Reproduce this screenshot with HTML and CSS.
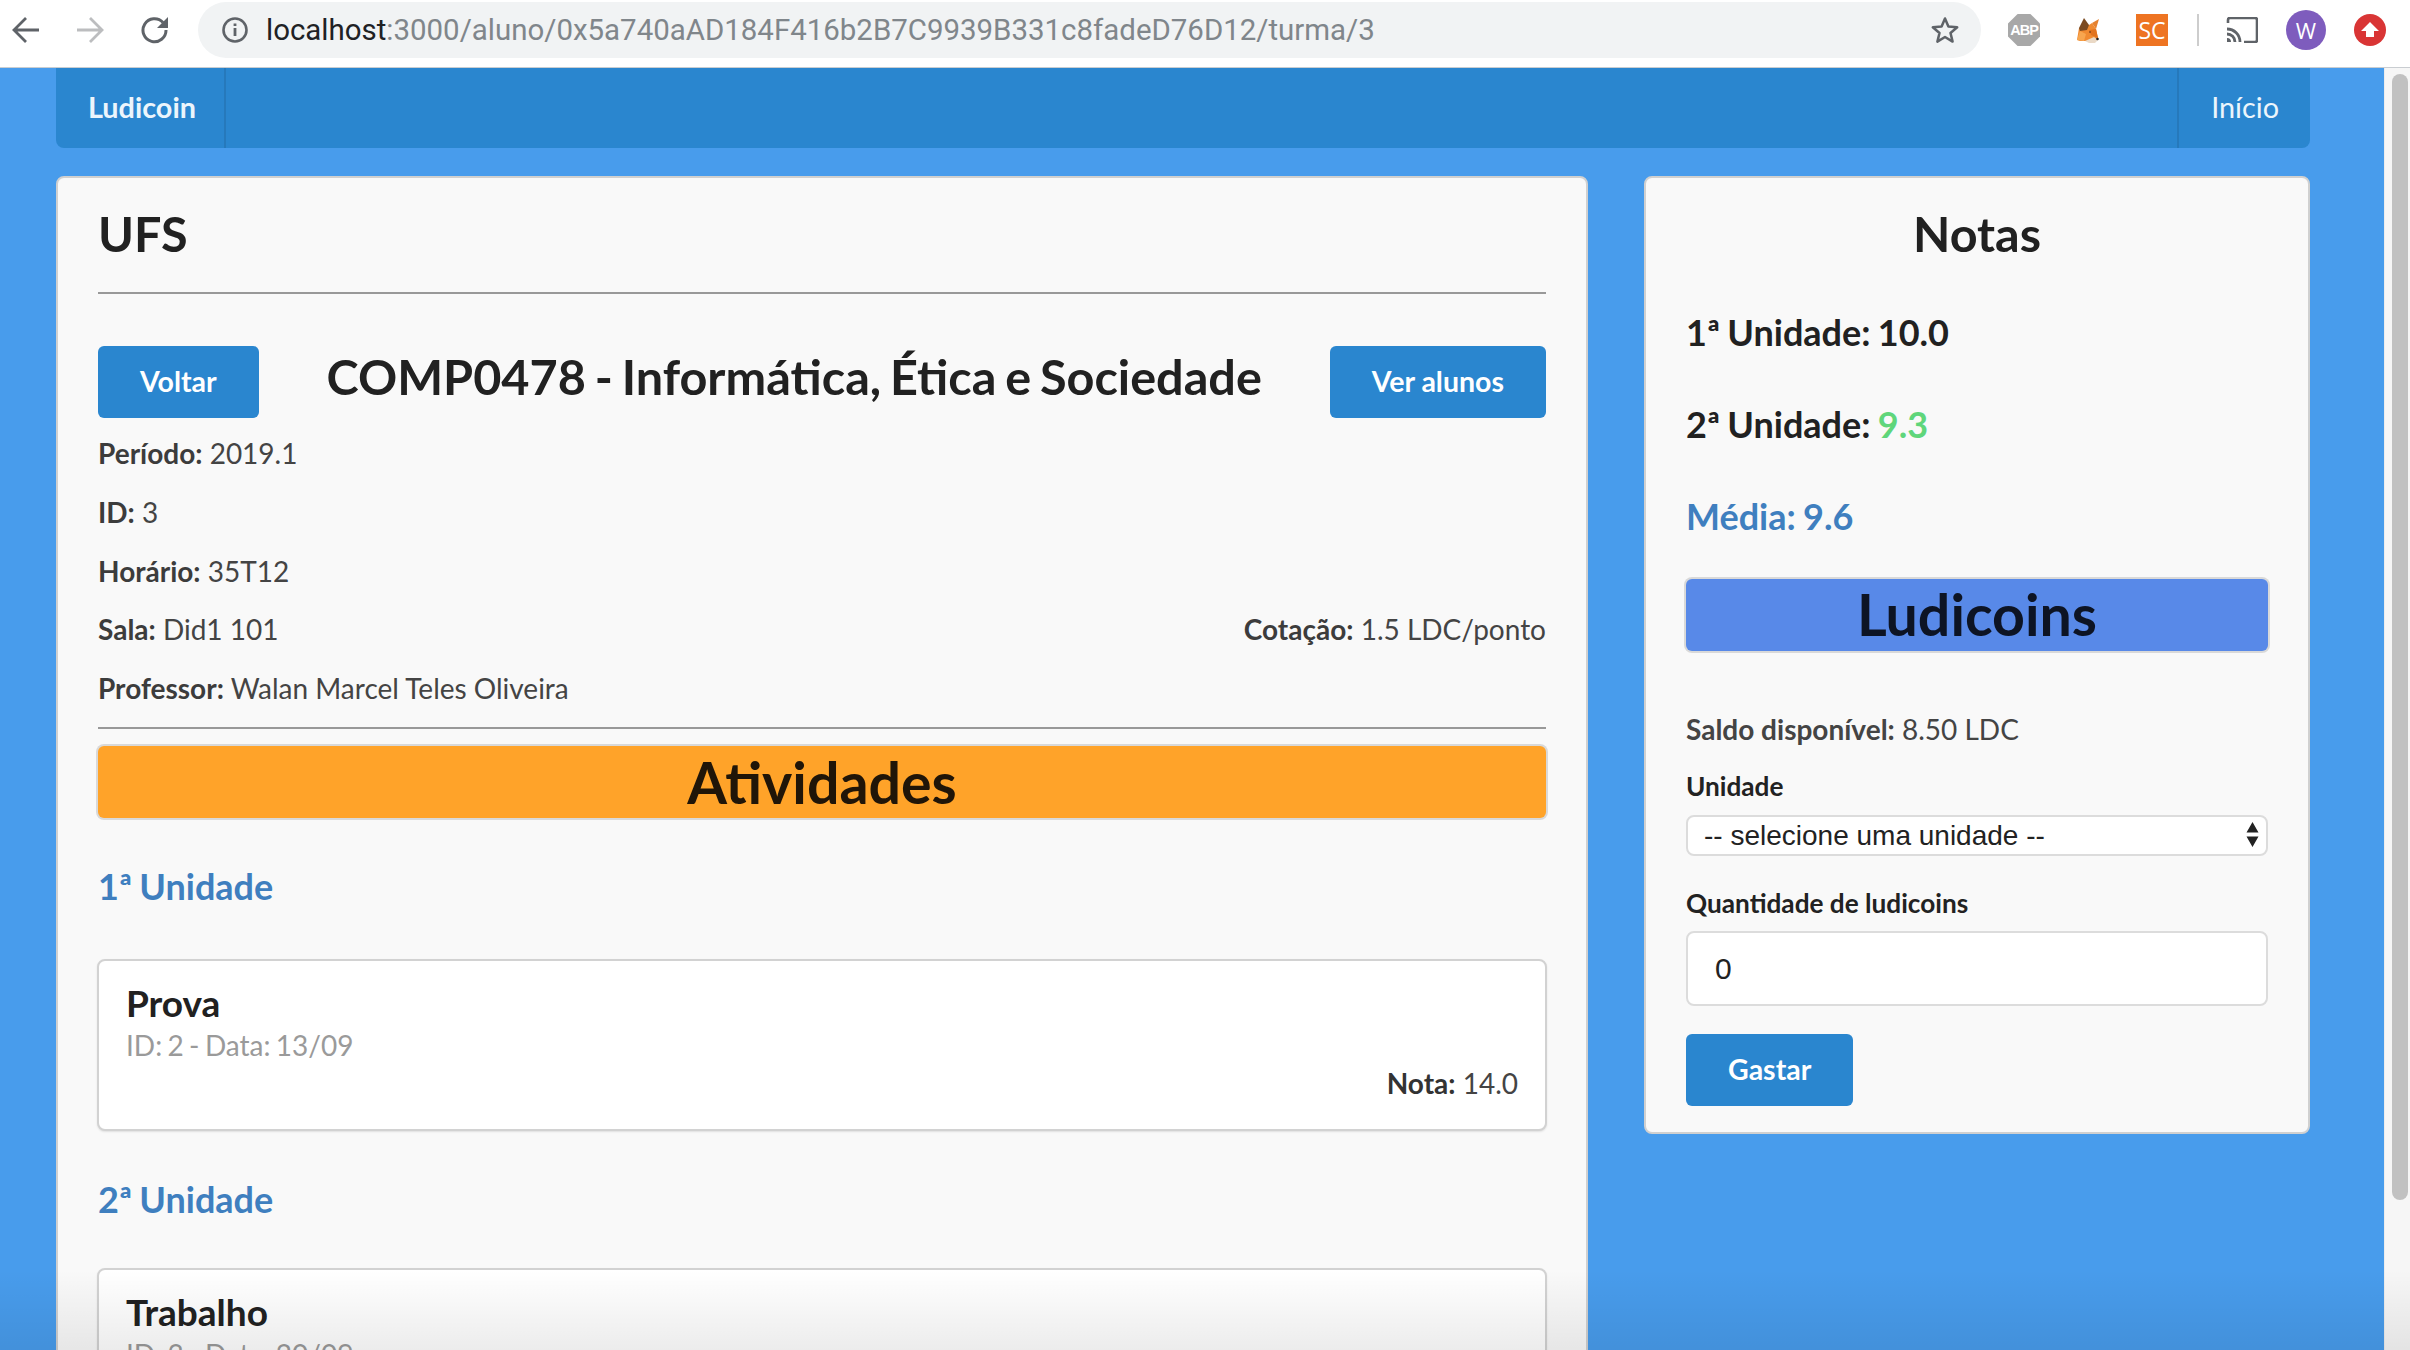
FILE: index.html
```html
<!DOCTYPE html>
<html lang="pt-BR">
<head>
<meta charset="utf-8">
<title>Ludicoin</title>
<link rel="stylesheet" href="styles.css">
</head>
<body>
<div class="window">
  <header class="chrome">
    <svg class="nav-icon" viewBox="0 0 28 28"><path d="M28 14H4M15 2 3 14l12 12" fill="none" stroke="#5f6368" stroke-width="2.8"/></svg>
    <svg class="nav-icon nav-forward" viewBox="0 0 28 28"><path d="M1 14h24M14 2l12 12-12 12" fill="none" stroke="#bcbdbf" stroke-width="2.8"/></svg>
    <svg class="nav-icon nav-reload" viewBox="0 0 28 28"><path d="M22 6.500A11.500 11.500 0 1 0 25 14" fill="none" stroke="#5f6368" stroke-width="3"/><path d="M27 1v11H16z" fill="#5f6368"/></svg>
    <div class="omnibox">
      <svg class="info-icon" viewBox="0 0 26 26"><circle cx="13" cy="13" r="11.500" fill="none" stroke="#5f6368" stroke-width="2.600"/><path d="M13 11v8M13 6.500v2.600" stroke="#5f6368" stroke-width="2.800"/></svg>
      <span class="url"><span class="url-host">localhost</span>:3000/aluno/0x5a740aAD184F416b2B7C9939B331c8fadeD76D12/turma/3</span>
      <svg class="star-icon" viewBox="0 0 30 30"><path d="M15 3.500l3.400 8.100 8.800.7-6.700 5.700 2.100 8.600L15 22l-7.600 4.600 2.100-8.600-6.700-5.700 8.800-.7z" fill="none" stroke="#5f6368" stroke-width="2.500" stroke-linejoin="round"/></svg>
    </div>
    <div class="extensions">
      <span class="ext-abp">ABP</span>
      <svg class="ext-fox" viewBox="0 0 22 25">
        <path d="M12 7l3-2 4 6 2 9-4 3H3l-3-1 2-12z" fill="#f08a30"/>
        <path d="M2 10 7 0l5 7-2 5-7 1z" fill="#7b4a20"/>
        <path d="M15 5l7-4-3 10z" fill="#e5812f"/>
        <path d="M0 22l3-9 6 3-2 7z" fill="#f7a64f"/>
        <path d="M12 12l7-1 2 9-7-3z" fill="#e2741f"/>
        <path d="M8 23l9-4 4 3-3 3h-6z" fill="#ead9c6"/>
        <circle cx="13" cy="14" r="1" fill="#8a4a1c"/>
        <circle cx="20.500" cy="21" r="1.300" fill="#222"/>
      </svg>
      <span class="ext-sc">SC</span>
      <span class="ext-sep"></span>
      <svg class="ext-cast" viewBox="0 0 32 26"><path d="M2 6V3a2 2 0 0 1 2-2h25a2 2 0 0 1 2 2v20a2 2 0 0 1-2 2H18" fill="none" stroke="#5f6368" stroke-width="2.600"/><path d="M1 12a13 13 0 0 1 13 13M1 17a8 8 0 0 1 8 8" fill="none" stroke="#5f6368" stroke-width="2.800"/><path d="M1 21a4 4 0 0 1 4 4H1z" fill="#5f6368"/></svg>
      <span class="ext-avatar">W</span>
      <svg class="ext-up" viewBox="0 0 32 32"><circle cx="16" cy="16" r="16" fill="#d93535"/><path d="M16 8l9 9h-5v6h-8v-6H7z" fill="#fff"/></svg>
    </div>
  </header>

  <div class="viewport">
    <div class="page">
      <nav class="navbar">
        <a class="brand">Ludicoin</a>
        <a class="nav-link">Início</a>
      </nav>
      <main class="columns">
        <section class="card">
          <h1 class="card-title">UFS</h1>
          <hr class="rule">
          <div class="course">
            <button class="btn">Voltar</button>
            <h2 class="course-name">COMP0478 - Informática, Ética e Sociedade</h2>
            <button class="btn">Ver alunos</button>
          </div>
          <p class="info"><b>Período:</b> 2019.1</p>
          <p class="info"><b>ID:</b> 3</p>
          <p class="info"><b>Horário:</b> 35T12</p>
          <p class="info info-split"><span><b>Sala:</b> Did1 101</span><span><b>Cotação:</b> 1.5 LDC/ponto</span></p>
          <p class="info info-last"><b>Professor:</b> Walan Marcel Teles Oliveira</p>
          <hr class="rule rule-tight">
          <div class="banner banner-orange">Atividades</div>
          <h3 class="unit unit-first">1ª Unidade</h3>
          <article class="item">
            <h4 class="item-title">Prova</h4>
            <p class="item-meta">ID: 2 - Data: 13/09</p>
            <p class="item-grade"><b>Nota:</b> 14.0</p>
          </article>
          <h3 class="unit">2ª Unidade</h3>
          <article class="item">
            <h4 class="item-title">Trabalho</h4>
            <p class="item-meta">ID: 3 - Data: 20/09</p>
          </article>
        </section>

        <aside class="card card-side">
          <h1 class="card-title card-title-center">Notas</h1>
          <p class="grade">1ª Unidade: 10.0</p>
          <p class="grade">2ª Unidade: <span class="grade-green">9.3</span></p>
          <p class="grade grade-blue">Média: 9.6</p>
          <div class="banner banner-blue">Ludicoins</div>
          <p class="saldo"><b>Saldo disponível:</b> 8.50 LDC</p>
          <label class="field-label">Unidade</label>
          <div class="select-wrap">
            <select class="select"><option>-- selecione uma unidade --</option></select>
            <svg class="select-arrows" viewBox="0 0 13 25"><path d="M6.500 0l6 10.500H.5zM6.500 25 .5 14.500h12z" fill="#222"/></svg>
          </div>
          <label class="field-label field-label-second">Quantidade de ludicoins</label>
          <input class="input" type="text" value="0">
          <button class="btn btn-spend">Gastar</button>
        </aside>
      </main>
    </div>
    <div class="scrollbar"><span class="thumb"></span></div>
    <div class="fade"></div>
  </div>
</div>
</body>
</html>
```

FILE: styles.css
```css
* { box-sizing: border-box; }
html, body { margin: 0; height: 100%; overflow: hidden; }
body { font-family: Lato, "Open Sans", sans-serif; color: #212121; }
p, h1, h2, h3, h4 { margin: 0; }

.window { display: flex; flex-direction: column; height: 1350px; }

/* Browser chrome */
.chrome { height: 68px; flex: none; display: flex; align-items: flex-start; background: #fff; border-bottom: 1px solid #c9cdd1; position: relative; }
.nav-icon { width: 28px; height: 28px; margin: 16px 0 0 11px; flex: none; }
.nav-forward { margin-left: 37px; }
.nav-reload { margin-left: 37px; }
.omnibox { margin: 2px 0 0 29px; width: 1783px; height: 56px; background: #f1f3f4; border-radius: 28px; display: flex; align-items: center; flex: none; }
.info-icon { width: 26px; height: 26px; margin-left: 24px; flex: none; }
.url { margin-left: 18px; font-family: Roboto, "Liberation Sans", sans-serif; font-size: 29.450px; color: #80868b; flex: 1; white-space: nowrap; }
.url-host { color: #202124; }
.star-icon { width: 30px; height: 30px; margin-right: 21px; flex: none; }
.extensions { display: flex; align-items: center; height: 60px; position: relative; flex: 1; }
.extensions > * { position: absolute; }
.ext-abp { left: 27px; top: 14px; width: 32px; height: 32px; background: #a8a8a8; clip-path: polygon(30% 0, 70% 0, 100% 30%, 100% 70%, 70% 100%, 30% 100%, 0 70%, 0 30%); color: #fff; font: bold 14.500px/32px "Liberation Sans", sans-serif; text-align: center; letter-spacing: -1px; }
.ext-fox { left: 96px; top: 18px; width: 22px; height: 25px; }
.ext-sc { left: 155px; top: 14px; width: 32px; height: 32px; background: #ee7422; color: #fff; font: 23px/32px "Open Sans", sans-serif; text-align: center; }
.ext-sep { left: 216px; top: 14px; width: 2px; height: 32px; background: #cdcdcd; }
.ext-cast { left: 245px; top: 17px; width: 32px; height: 26px; }
.ext-avatar { left: 305px; top: 10px; width: 40px; height: 40px; border-radius: 50%; background: #7e5cbd; color: #fff; font: 22px/40px "Open Sans", sans-serif; text-align: center; }
.ext-up { left: 373px; top: 14px; width: 32px; height: 32px; }

/* Viewport */
.viewport { flex: 1; min-height: 0; display: flex; position: relative; overflow: hidden; background: #489cec; }
.page { flex: 1; min-width: 0; padding: 0 74px 0 56px; overflow: hidden; }
.scrollbar { width: 26px; flex: none; background: #f6f6f6; border-left: 1px solid #ececec; padding: 6px 2px 0 7px; }
.thumb { display: block; width: 16px; height: 1126px; background: #c1c1c1; border-radius: 8px; }
.fade { position: absolute; left: 0; right: 0; bottom: 0; height: 80px; background: linear-gradient(to bottom, rgba(0,0,0,0), rgba(0,0,0,.075)); pointer-events: none; }

/* Navbar */
.navbar { height: 80px; display: flex; justify-content: space-between; background: #2a86cf; border-radius: 0 0 8px 8px; font-size: 28.800px; color: #ecf5fc; }
.brand, .nav-link { display: flex; align-items: center; padding: 0 31px 2px 32px; }
.brand { font-weight: 700; border-right: 2px solid #2679bb; width: 170px; }
.nav-link { border-left: 2px solid #2679bb; }

/* Cards */
.columns { display: grid; grid-template-columns: 1532px 666px; column-gap: 56px; margin-top: 28px; align-items: start; }
.card { background: #f9f9f9; border: 2px solid #d0d0d0; border-radius: 8px; padding: 26px 40px 26px; }
.card-title { font-size: 48.500px; line-height: 58px; font-weight: 700; }
.card-title-center { text-align: center; }
.rule { border: 0; height: 2px; background: #999; margin: 30px 0 0; }
.rule-tight { margin-top: 20px; }
.course { display: flex; justify-content: space-between; align-items: flex-start; margin-top: 52px; }
.course-name { font-size: 48.600px; line-height: 60px; font-weight: 700; white-space: nowrap; word-spacing: -3px; }
.btn { height: 72px; padding: 0 42px 2px; background: #2a86cf; color: #fff; border: 0; border-radius: 6px; font: 700 28.500px Lato, sans-serif; white-space: nowrap; }

.info { font-size: 28px; line-height: 38px; color: #444; margin-top: 20.800px; }
.course + .info { margin-top: 16px; }
.info b { color: #3c3c3c; }
.info-split { display: flex; justify-content: space-between; }

.banner { height: 72px; border-radius: 6px; text-align: center; font-size: 57.300px; line-height: 72px; font-weight: 700; box-shadow: 0 0 0 2px #d9d9d9; color: #201508; }
.banner-orange { background: #ffa329; margin-top: 17px; }
.banner-blue { background: #5889e8; color: #0d1424; margin-top: 41px; line-height: 70px; }

.unit { font-size: 36px; line-height: 44px; font-weight: 700; color: #3f7fbf; margin: 46px 0 47px; word-spacing: -1.500px; }
.unit-first { margin-top: 46px; margin-bottom: 51px; }

.item { background: #fff; border: 2px solid #d2d2d2; border-radius: 8px; padding: 20px 27px 28px 27px; margin: 0 -1px; box-shadow: 0 1px 2px rgba(0,0,0,.1); }
.item-title { font-size: 37px; line-height: 44px; font-weight: 700; color: #212121; }
.item-meta { font-size: 28px; line-height: 36px; color: #9a9a9a; margin-top: 2px; word-spacing: -1.800px; }
.item-grade { font-size: 28px; line-height: 36px; color: #444; text-align: right; margin-top: 2px; }
.item-grade b { color: #333; }

.grade { font-size: 36px; line-height: 44px; font-weight: 700; margin-top: 48px; word-spacing: -1.500px; }
.grade-green { color: #5fd67b; }
.grade-blue { color: #3f7fbf; }

.saldo { font-size: 28px; line-height: 38px; color: #444; margin-top: 59px; }
.field-label { display: block; font-size: 26.200px; line-height: 34px; font-weight: 700; color: #222; margin-top: 21px; }
.field-label-second { margin-top: 30px; }
.select-wrap { position: relative; margin-top: 12px; }
.select { display: block; width: 100%; height: 41px; appearance: none; background: #fff; border: 2px solid #dcdcdc; border-radius: 8px; padding: 0 16px; font: 28px "Liberation Sans", sans-serif; color: #222; }
.select-arrows { position: absolute; right: 9px; top: 7px; width: 13px; height: 25px; }
.input { display: block; width: 100%; height: 75px; margin-top: 11px; background: #fff; border: 2px solid #dcdcdc; border-radius: 8px; padding: 0 27px; font: 30px "Liberation Sans", sans-serif; color: #222; }
.btn-spend { display: block; height: 72px; margin-top: 28px; }
```
